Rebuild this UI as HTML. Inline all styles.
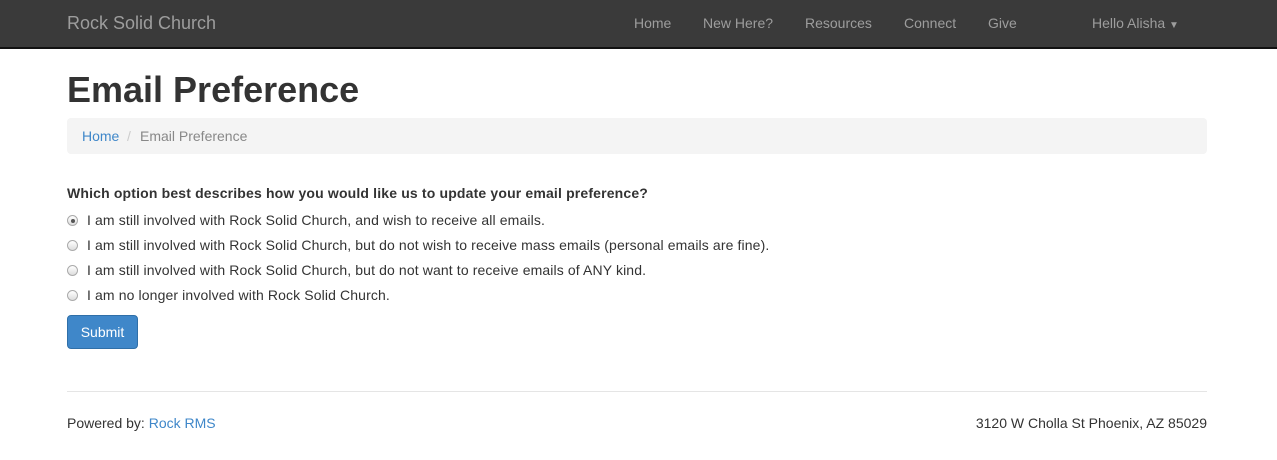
<!DOCTYPE html>
<html><head><style>
body{margin:0;font-family:"Liberation Sans",sans-serif;font-size:14px;color:#333;background:#fff;width:1277px;height:460px;overflow:hidden;position:relative}
.nav{height:47px;background:#3a3a3a;border-bottom:2px solid #111;position:relative}
.nav .brand{position:absolute;left:67px;top:13px;font-size:18px;color:#9d9d9d}
.nav a{position:absolute;top:15px;color:#9d9d9d;font-size:14px}
h1{position:absolute;left:67px;top:69px;margin:0;font-size:36px;font-weight:bold;color:#333}
.bc{position:absolute;left:67px;top:118px;width:1140px;height:36px;background:#f4f4f4;border-radius:4px}
.bc span{position:absolute;top:10px}
.q{position:absolute;left:67px;top:185px;font-weight:bold;letter-spacing:0.16px}
.r{position:absolute;left:67px;font-size:14px;letter-spacing:0.12px}
.r i{display:inline-block;width:11px;height:11px;border-radius:50%;border:1px solid #aaa;background:linear-gradient(#fff,#ddd);vertical-align:-1px;margin-right:9px;box-sizing:border-box;position:relative}
.r i.on:after{content:"";position:absolute;left:3px;top:3px;width:4px;height:4px;border-radius:50%;background:#555}
.btn{position:absolute;left:67px;top:315px;width:71px;height:34px;background:#3f87c9;border:1px solid #2f6fa8;box-sizing:border-box;border-radius:4px;color:#fff;text-align:center;line-height:32px}
hr{position:absolute;left:67px;top:391px;width:1140px;margin:0;border:0;border-top:1px solid #e5e5e5}
.f{position:absolute;top:415px}
.blue{color:#3f87c9}
</style></head><body>
<div class="nav"><span class="brand">Rock Solid Church</span>
<a style="left:634px">Home</a><a style="left:703px">New Here?</a><a style="left:805px">Resources</a><a style="left:904px">Connect</a><a style="left:988px">Give</a><a style="left:1092px">Hello Alisha <span style="font-size:10px">▼</span></a></div>
<h1>Email Preference</h1>
<div class="bc"><span class="blue" style="left:15px">Home</span><span style="left:60px;color:#ccc">/</span><span style="left:73px;color:#888">Email Preference</span></div>
<div class="q">Which option best describes how you would like us to update your email preference?</div>
<div class="r" style="top:212px"><i class="on"></i>I am still involved with Rock Solid Church, and wish to receive all emails.</div>
<div class="r" style="top:237px"><i></i>I am still involved with Rock Solid Church, but do not wish to receive mass emails (personal emails are fine).</div>
<div class="r" style="top:262px"><i></i>I am still involved with Rock Solid Church, but do not want to receive emails of ANY kind.</div>
<div class="r" style="top:287px"><i></i>I am no longer involved with Rock Solid Church.</div>
<div class="btn">Submit</div>
<hr>
<div class="f" style="left:67px">Powered by: <span class="blue">Rock RMS</span></div>
<div class="f" style="right:70px">3120 W Cholla St Phoenix, AZ 85029</div>
</body></html>
